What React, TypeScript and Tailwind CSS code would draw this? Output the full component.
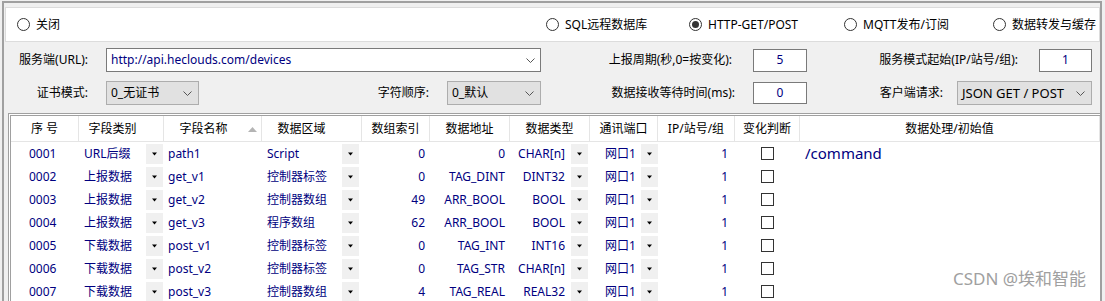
import React from 'react';

type Row = {
  no: string;
  kind: string;
  name: string;
  area: string;
  index: string;
  addr: string;
  type: string;
  port: string;
  ip: string;
  init: string;
};

const rows: Row[] = [
  { no: '0001', kind: 'URL后缀', name: 'path1', area: 'Script', index: '0', addr: '0', type: 'CHAR[n]', port: '网口1', ip: '1', init: '/command' },
  { no: '0002', kind: '上报数据', name: 'get_v1', area: '控制器标签', index: '0', addr: 'TAG_DINT', type: 'DINT32', port: '网口1', ip: '1', init: '' },
  { no: '0003', kind: '上报数据', name: 'get_v2', area: '控制器数组', index: '49', addr: 'ARR_BOOL', type: 'BOOL', port: '网口1', ip: '1', init: '' },
  { no: '0004', kind: '上报数据', name: 'get_v3', area: '程序数组', index: '62', addr: 'ARR_BOOL', type: 'BOOL', port: '网口1', ip: '1', init: '' },
  { no: '0005', kind: '下载数据', name: 'post_v1', area: '控制器标签', index: '0', addr: 'TAG_INT', type: 'INT16', port: '网口1', ip: '1', init: '' },
  { no: '0006', kind: '下载数据', name: 'post_v2', area: '控制器标签', index: '0', addr: 'TAG_STR', type: 'CHAR[n]', port: '网口1', ip: '1', init: '' },
  { no: '0007', kind: '下载数据', name: 'post_v3', area: '控制器数组', index: '4', addr: 'TAG_REAL', type: 'REAL32', port: '网口1', ip: '1', init: '' },
];

function Radio({ label, checked, className }: { label: string; checked?: boolean; className: string }) {
  return (
    <div className={`flex items-center gap-[6px] ${className}`}>
      <span className="w-[13px] h-[13px] rounded-full border border-[#333] bg-white flex items-center justify-center">
        {checked && <span className="w-[7px] h-[7px] rounded-full bg-[#333]" />}
      </span>
      <span className="leading-none">{label}</span>
    </div>
  );
}

function Chevron() {
  return (
    <svg width="9" height="5" viewBox="0 0 9 5" className="shrink-0">
      <polyline points="0.5,0.5 4.5,4.5 8.5,0.5" fill="none" stroke="#555" strokeWidth="1" />
    </svg>
  );
}

function Combo({ text, className, textClass = '' }: { text: string; className: string; textClass?: string }) {
  return (
    <div className={`h-[24px] bg-[#e1e1e1] border border-[#adadad] flex items-center justify-between pl-[4px] pr-[6px] ${className}`}>
      <span className={`leading-none ${textClass}`}>{text}</span>
      <Chevron />
    </div>
  );
}

function CellButton({ className = '' }: { className?: string }) {
  return (
    <span className={`w-[17px] h-[20px] bg-[#f0f0f0] flex items-center justify-center shrink-0 ${className}`}>
      <svg width="7" height="4" viewBox="0 0 7 4">
        <path d="M1 0.5 L6 0.5 L3.5 3.5 Z" fill="#000" />
      </svg>
    </span>
  );
}

const cols = 'grid grid-cols-[68px_85px_98px_100px_68px_80px_80px_68px_77px_65px_1fr]';

export default function App() {
  return (
    <div className="w-[1105px] h-[301px] bg-[#f0f0f0] overflow-hidden relative font-['Noto_Sans','Noto_Sans_CJK_SC',sans-serif] text-[12px] text-black">
      <div className="ml-[2px] mt-[1px] w-[1100px] h-[320px] border-l-2 border-t-2 border-r-2 border-[#a0a0a0] flex flex-col">
        {/* mode selection */}
        <div className="ml-[1px] mt-[4px] h-[35px] border border-[#dcdcdc] bg-white flex items-center">
          <Radio label="关闭" className="ml-[11px] w-[529px]" />
          <Radio label="SQL远程数据库" className="w-[143px]" />
          <Radio label="HTTP-GET/POST" checked className="w-[155px]" />
          <Radio label="MQTT发布/订阅" className="w-[149px]" />
          <Radio label="数据转发与缓存" className="" />
        </div>

        {/* row 1 */}
        <div className="mt-[6px] h-[24px] flex items-center">
          <span className="w-[102px] text-right pr-[18px] leading-none">服务端(URL):</span>
          <div className="w-[435px] h-[24px] bg-white border border-[#7a7a7a] flex items-center justify-between pl-[4px] pr-[5px]">
            <span className="leading-none text-[#000080]">http://api.heclouds.com/devices</span>
            <Chevron />
          </div>
          <span className="w-[212px] text-right pr-[21px] leading-none">上报周期(秒,0=按变化):</span>
          <div className="w-[54px] h-[23px] bg-white border border-[#7a7a7a] flex items-center justify-center text-[#000080] leading-none">5</div>
          <span className="w-[232px] text-right pr-[21px] leading-none">服务模式起始(IP/站号/组):</span>
          <div className="w-[53px] h-[23px] bg-white border border-[#7a7a7a] flex items-center justify-center text-[#000080] leading-none">1</div>
        </div>

        {/* row 2 */}
        <div className="mt-[9px] h-[24px] flex items-center">
          <span className="w-[102px] text-right pr-[18px] leading-none">证书模式:</span>
          <Combo text="0_无证书" className="w-[93px]" />
          <span className="w-[248px] text-right pr-[18px] leading-none">字符顺序:</span>
          <Combo text="0_默认" className="w-[94px]" />
          <span className="w-[212px] text-right pr-[18px] leading-none">数据接收等待时间(ms):</span>
          <div className="w-[54px] h-[22px] bg-white border border-[#7a7a7a] flex items-center justify-center text-[#000080] leading-none">0</div>
          <span className="w-[150px] text-right pr-[14px] leading-none">客户端请求:</span>
          <Combo text="JSON GET / POST" className="w-[135px]" textClass="text-[13px]" />
        </div>

        {/* table */}
        <div className="mt-[8px] ml-[4px] flex-1 bg-white border-l-[3px] border-t-[3px] border-double border-[#a0a0a0]">
          <div className={`${cols} h-[26px] border-b border-[#e5e5e5]`}>
            {[
              ['序 号', ''],
              ['字段类别', 'pr-[17px]'],
              ['字段名称', 'pr-[18px] relative'],
              ['数据区域', 'pr-[20px]'],
              ['数组索引', ''],
              ['数据地址', ''],
              ['数据类型', ''],
              ['通讯端口', ''],
              ['IP/站号/组', ''],
              ['变化判断', ''],
              ['数据处理/初始值', ''],
            ].map(([label, extra], i) => (
              <div key={i} className={`flex items-center justify-center leading-none border-r border-[#e5e5e5] ${extra}`}>
                {label}
                {i === 2 && (
                  <svg width="9" height="5" viewBox="0 0 9 5" className="absolute right-[4px] top-[11px]">
                    <path d="M0 5 L4.5 0 L9 5 Z" fill="#b4b4b4" />
                  </svg>
                )}
              </div>
            ))}
          </div>

          {rows.map((r) => (
            <div key={r.no} className={`${cols} h-[23px] text-[#000080] leading-none`}>
              <div className="flex items-center pl-[18px]">{r.no}</div>
              <div className="flex items-center justify-between pl-[5px] pr-[1px]">
                <span>{r.kind}</span>
                <CellButton />
              </div>
              <div className="flex items-center pl-[4px]">{r.name}</div>
              <div className="flex items-center justify-between pl-[5px] pr-[3px]">
                <span>{r.area}</span>
                <CellButton />
              </div>
              <div className="flex items-center justify-end pr-[5px]">{r.index}</div>
              <div className="flex items-center justify-end pr-[5px]">{r.addr}</div>
              <div className="flex items-center justify-end gap-[6px] pr-[2px]">
                <span>{r.type}</span>
                <CellButton />
              </div>
              <div className="flex items-center justify-between pl-[15px]">
                <span>{r.port}</span>
                <CellButton />
              </div>
              <div className="flex items-center justify-end pr-[7px]">{r.ip}</div>
              <div className="flex items-center justify-center">
                <span className="w-[13px] h-[13px] border border-[#333] bg-white" />
              </div>
              <div className="flex items-center pl-[5px] text-[15px]">{r.init}</div>
            </div>
          ))}
        </div>
      </div>

      <div className="absolute left-[953px] top-[270px] text-[17px] leading-none text-[#a0a0a0]">CSDN @埃和智能</div>
    </div>
  );
}
